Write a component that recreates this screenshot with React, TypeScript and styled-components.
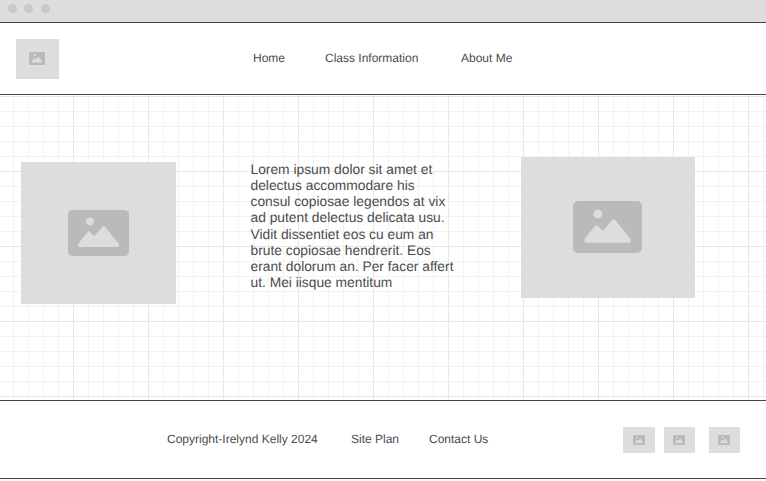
import React from "react";
import styled, { createGlobalStyle } from "styled-components";

const GlobalStyle = createGlobalStyle`
  * { box-sizing: border-box; }
  body {
    margin: 0;
    background: #f8f8f8;
    color: #4c4c4c;
    font-family: "Liberation Sans", Arial, sans-serif;
    text-rendering: geometricPrecision;
    overflow: hidden;
  }
`;

const Page = styled.div`
  width: 766px;
  height: 481px;
  display: flex;
  flex-direction: column;
`;

const TitleBar = styled.div`
  height: 23px;
  flex: none;
  display: flex;
  gap: 7px;
  padding: 4px 0 0 8px;
  background: #ddd;
  border-bottom: 1px solid #444;
`;

const Dot = styled.span<{ $gap?: number }>`
  width: 9px;
  height: 9px;
  margin-right: ${(p) => p.$gap ?? 0}px;
  border-radius: 50%;
  background: #c8c8c8;
`;

const Header = styled.header`
  height: 72px;
  flex: none;
  display: flex;
  align-items: flex-start;
  padding: 16px 0 0 16px;
  background: #fff;
  border-bottom: 1px solid #444;
`;

const Nav = styled.nav`
  display: flex;
  margin: 12px 0 0 194px;
`;

const TextLink = styled.a<{ $width?: number }>`
  width: ${(p) => (p.$width ? `${p.$width}px` : "auto")};
  font-size: 12px;
  line-height: 14px;
  white-space: nowrap;
`;

const Main = styled.main`
  height: 306px;
  flex: none;
  display: flex;
  align-items: flex-start;
  padding-left: 21px;
  background-color: #fff;
  background-image:
    linear-gradient(to right, #e7e7e7 1px, transparent 1px),
    linear-gradient(to bottom, #e7e7e7 1px, transparent 1px),
    linear-gradient(to right, #f3f3f3 1px, transparent 1px),
    linear-gradient(to bottom, #f3f3f3 1px, transparent 1px);
  background-size: 75px 75px, 75px 75px, 15px 15px, 15px 15px;
  background-position: 73px 0, 0 1px, 13px 0, 0 1px;
  border-bottom: 1px solid #444;
`;

const Copy = styled.p`
  width: 270.5px;
  margin: 66.9px 0 0 74.5px;
  font-size: 13.8px;
  line-height: 16.17px;
  white-space: pre-line;
`;

const Footer = styled.footer`
  height: 78px;
  flex: none;
  display: flex;
  align-items: flex-start;
  padding: 26px 0 0 167px;
  background: #fff;
  border-bottom: 1px solid #444;
`;

const FooterLinks = styled.nav`
  display: flex;
  width: 456px;
  margin-top: 5px;
`;

const Frame = styled.div<{ $w: number; $h: number; $top?: number; $left?: number }>`
  width: ${(p) => p.$w}px;
  height: ${(p) => p.$h}px;
  flex: none;
  display: flex;
  align-items: center;
  justify-content: center;
  margin: ${(p) => p.$top ?? 0}px 0 0 ${(p) => p.$left ?? 0}px;
  background: #ddd;
`;

const Glyph = styled.svg<{ $oddX: number; $oddY: number }>`
  display: block;
  flex: none;
  margin: 0 ${(p) => p.$oddX}px ${(p) => p.$oddY}px 0;
`;

type PictureProps = { w: number; h: number; icon: number; iconHeight: number; top?: number; left?: number };

function Picture({ w, h, icon, iconHeight, top, left }: PictureProps) {
  return (
    <Frame $w={w} $h={h} $top={top} $left={left}>
      <Glyph
        width={icon}
        height={iconHeight}
        viewBox="0 0 61 46"
        preserveAspectRatio="none"
        $oddX={(w - icon) % 2}
        $oddY={(h - iconHeight) % 2}
      >
        <rect width="61" height="46" rx="4.5" fill="#bababa" />
        <circle cx="22" cy="11.5" r="3.9" fill="#ddd" />
        <path
          d="M11.7 35.4 V34.4 L20.8 23 L26.3 28.6 L36 17.9 L49.4 34.4 V35.4 Z"
          fill="#ddd"
          stroke="#ddd"
          strokeWidth="3.2"
          strokeLinejoin="round"
        />
      </Glyph>
    </Frame>
  );
}

const COPY = `Lorem ipsum dolor sit amet et
delectus accommodare his
consul copiosae legendos at vix
ad putent delectus delicata usu.
Vidit dissentiet eos cu eum an
brute copiosae hendrerit. Eos
erant dolorum an. Per facer affert
ut. Mei iisque mentitum`;

export default function App() {
  return (
    <Page>
      <GlobalStyle />
      <TitleBar>
        <Dot />
        <Dot $gap={1} />
        <Dot />
      </TitleBar>
      <Header>
        <Picture w={43} h={40} icon={16} iconHeight={13} />
        <Nav>
          <TextLink $width={72}>Home</TextLink>
          <TextLink $width={136}>Class Information</TextLink>
          <TextLink>About Me</TextLink>
        </Nav>
      </Header>
      <Main>
        <Picture w={155} h={142} icon={61} iconHeight={46} top={67} />
        <Copy>{COPY}</Copy>
        <Picture w={174} h={141} icon={69} iconHeight={52} top={62} />
      </Main>
      <Footer>
        <FooterLinks>
          <TextLink $width={184}>Copyright-Irelynd Kelly 2024</TextLink>
          <TextLink $width={78}>Site Plan</TextLink>
          <TextLink>Contact Us</TextLink>
        </FooterLinks>
        <Picture w={32} h={26} icon={12} iconHeight={10} />
        <Picture w={31} h={26} icon={12} iconHeight={10} left={9} />
        <Picture w={31} h={26} icon={12} iconHeight={10} left={14} />
      </Footer>
    </Page>
  );
}
